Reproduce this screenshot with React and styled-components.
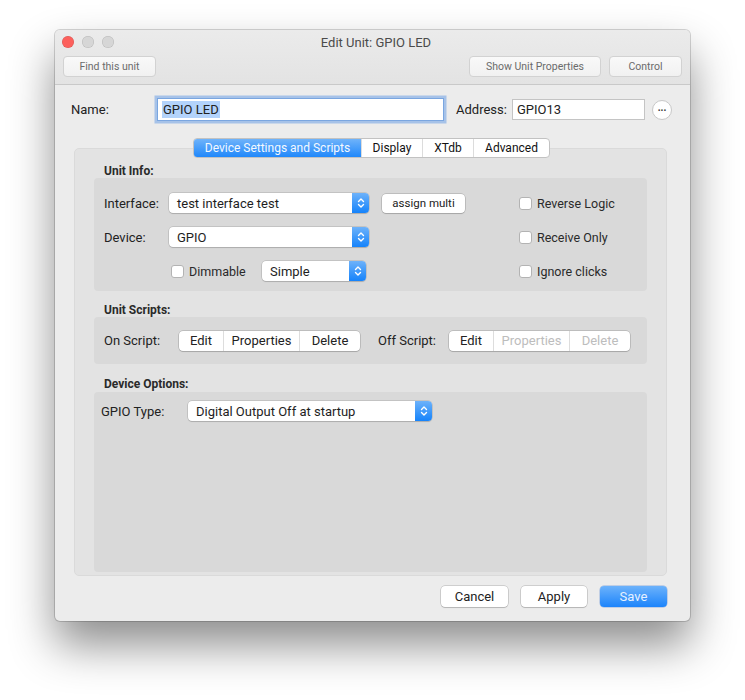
import styled, { createGlobalStyle, css } from "styled-components";

const GlobalStyle = createGlobalStyle`
  body {
    margin: 0;
    background: #fff;
    font-family: Roboto, "Liberation Sans", sans-serif;
    color: #222;
  }
`;

const Page = styled.div`
  padding: 30px 0 0 55px;
  height: 670px;
`;

const Window = styled.div`
  width: 635px;
  height: 591px;
  background: #ececec;
  border-radius: 5px;
  overflow: hidden;
  display: flex;
  flex-direction: column;
  box-shadow: 0 24px 45px rgba(0, 0, 0, 0.45), 0 0 0 1px rgba(0, 0, 0, 0.16);
`;

const TitleBar = styled.div`
  background: linear-gradient(#ebebeb, #e3e3e3);
  border-bottom: 1px solid #c9c9c9;
  padding-bottom: 7px;
`;

const TitleRow = styled.div`
  height: 24px;
  display: grid;
  grid-template-columns: 1fr auto 1fr;
  align-items: center;
  padding-left: 7px;
`;

const Lights = styled.div`
  display: flex;
  gap: 8px;
`;

const Light = styled.span`
  width: 12px;
  height: 12px;
  border-radius: 50%;
  background: ${p => p.$color};
  box-shadow: inset 0 0 0 0.5px rgba(0, 0, 0, 0.15);
`;

const Title = styled.div`
  font-size: 13px;
  color: #4b4b4b;
`;

const Toolbar = styled.div`
  display: flex;
  gap: 8px;
  padding: 0 8px;
  margin-top: 2px;
`;

const ToolButton = styled.div`
  height: 21px;
  width: ${p => p.$w}px;
  box-sizing: border-box;
  border: 1px solid #d2d2d2;
  border-radius: 4px;
  background: linear-gradient(#f9f9f9, #f1f1f1);
  font-size: 10.5px;
  color: #6b6b6b;
  display: flex;
  align-items: center;
  justify-content: center;
  ${p => p.$push && css`margin-left: auto;`}
`;

const Body = styled.div`
  flex: 1;
  display: flex;
  flex-direction: column;
`;

const NameRow = styled.div`
  display: flex;
  align-items: center;
  padding: 13px 0 0 16px;
  font-size: 13px;
`;

const FieldLabel = styled.span`
  width: ${p => p.$w}px;
  flex: none;
  margin-left: ${p => p.$ml || 0}px;
`;

const TextField = styled.div`
  width: ${p => p.$w}px;
  height: ${p => p.$h || 21}px;
  box-sizing: border-box;
  background: #fff;
  border: 1px solid ${p => (p.$focus ? "#7aa6e0" : "#c4c4c4")};
  ${p => p.$focus && css`box-shadow: 0 0 0 2.5px rgba(110, 160, 230, 0.55);`}
  display: flex;
  align-items: center;
  padding-left: 4px;
  font-size: 13px;
  margin-right: ${p => p.$mr || 0}px;
`;

const Selected = styled.span`
  background: #b3d3fb;
  padding: 1px 1px;
`;

const RoundButton = styled.div`
  width: 20px;
  height: 20px;
  border-radius: 50%;
  box-sizing: border-box;
  border: 1px solid #c8c8c8;
  background: #fff;
  margin-left: 7px;
  font-size: 10px;
  font-weight: bold;
  display: flex;
  align-items: center;
  justify-content: center;
  line-height: 1;
  padding-bottom: 3px;
  color: #333;
`;

const TabArea = styled.div`
  margin: 17px 23px 0 19px;
  display: flex;
  flex-direction: column;
`;

const Tabs = styled.div`
  align-self: center;
  display: flex;
  height: 20px;
  box-sizing: border-box;
  border: 1px solid #c2c2c2;
  border-radius: 4px;
  background: #fff;
  overflow: hidden;
  position: relative;
  z-index: 1;
  margin-left: 2px;
`;

const Tab = styled.div`
  width: ${p => p.$w}px;
  display: flex;
  align-items: center;
  justify-content: center;
  font-size: 12px;
  color: #111;
  border-left: 1px solid #dcdcdc;
  &:first-child { border-left: none; }
  ${p => p.$active && css`
    background: linear-gradient(#6fb3fa, #2088fb);
    color: #f4f9ff;
  `}
`;

const TabBox = styled.div`
  margin-top: -10px;
  height: 428px;
  box-sizing: border-box;
  background: #e3e3e3;
  border: 1px solid #dadada;
  border-radius: 5px;
  padding: 0 19px 5px;
  display: flex;
  flex-direction: column;
`;

const SectionLabel = styled.div`
  font-size: 12px;
  font-weight: bold;
  line-height: 14px;
  color: #2a2a2a;
  margin: ${p => p.$top}px 0 ${p => p.$bottom || 0}px 10px;
`;

const Group = styled.div`
  background: #d9d9d9;
  border-radius: 4px;
  box-sizing: border-box;
  height: ${p => p.$h}px;
  padding: ${p => p.$pad};
  font-size: 13px;
  flex: none;
`;

const InfoGrid = styled.div`
  display: grid;
  grid-template-columns: 65px 200px 150px 1fr;
  grid-auto-rows: 34px;
  align-items: center;
`;

const Cell = styled.div`
  display: flex;
  align-items: center;
  padding-left: ${p => p.$pl || 0}px;
`;

const PopupBox = styled.div`
  width: ${p => p.$w}px;
  height: 20px;
  box-sizing: border-box;
  display: flex;
  background: #fff;
  border-radius: 4px;
  box-shadow: 0 0 0 0.5px rgba(0, 0, 0, 0.2), 0 1px 1px rgba(0, 0, 0, 0.12);
  overflow: hidden;
`;

const PopupText = styled.div`
  flex: 1;
  padding-left: 8px;
  display: flex;
  align-items: center;
  font-size: 13px;
  color: #1e1e1e;
`;

const PopupArrow = styled.div`
  width: 17px;
  background: linear-gradient(#6db2fa, #1583fb);
  display: flex;
  align-items: center;
  justify-content: center;
`;

const Popup = ({ w, children }) => (
  <PopupBox $w={w}>
    <PopupText>{children}</PopupText>
    <PopupArrow>
      <svg width="8" height="12" viewBox="0 0 8 12" fill="none" stroke="#fff" strokeWidth="1.4" strokeLinecap="round" strokeLinejoin="round">
        <path d="M1.5 4.5 L4 2 L6.5 4.5" />
        <path d="M1.5 7.5 L4 10 L6.5 7.5" />
      </svg>
    </PopupArrow>
  </PopupBox>
);

const PushButton = styled.div`
  width: ${p => p.$w}px;
  height: ${p => p.$h || 21}px;
  box-sizing: border-box;
  border-radius: 4px;
  background: #fff;
  box-shadow: 0 0 0 0.5px rgba(0, 0, 0, 0.25), 0 1px 1px rgba(0, 0, 0, 0.12);
  display: flex;
  align-items: center;
  justify-content: center;
  font-size: ${p => p.$fs || 13}px;
  color: #222;
  ${p => p.$primary && css`
    background: linear-gradient(#6cb2fb, #1c84fb);
    color: #e6f1ff;
    box-shadow: 0 0 0 0.5px rgba(20, 90, 200, 0.4);
  `}
`;

const CheckRow = styled.label`
  display: flex;
  align-items: center;
  gap: 5px;
  font-size: 12.5px;
  color: #2a2a2a;
  ${p => p.$w && css`width: ${p.$w}px;`}
`;

const Box = styled.span`
  width: 13px;
  height: 13px;
  box-sizing: border-box;
  background: #fff;
  border: 1px solid #b3b3b3;
  border-radius: 3px;
  flex: none;
`;

const Check = ({ w, children }) => (
  <CheckRow $w={w}>
    <Box />
    {children}
  </CheckRow>
);

const ScriptRow = styled.div`
  display: flex;
  align-items: center;
  height: 100%;
`;

const Segmented = styled.div`
  display: flex;
  height: 20px;
  box-sizing: border-box;
  background: #fff;
  border-radius: 4px;
  box-shadow: 0 0 0 0.5px rgba(0, 0, 0, 0.25), 0 1px 1px rgba(0, 0, 0, 0.12);
  overflow: hidden;
`;

const Segment = styled.div`
  width: ${p => p.$w}px;
  display: flex;
  align-items: center;
  justify-content: center;
  font-size: 13px;
  color: ${p => (p.$disabled ? "#bdbdbd" : "#222")};
  border-left: 1px solid #dddddd;
  &:first-child { border-left: none; }
`;

const OptionRow = styled.div`
  display: flex;
  align-items: center;
  height: 20px;
`;

const Footer = styled.div`
  display: flex;
  justify-content: flex-end;
  gap: 13px;
  padding: 10px 23px 0 0;
`;

const ScriptButtons = ({ disabled }) => (
  <Segmented>
    <Segment $w={44}>Edit</Segment>
    <Segment $w={75} $disabled={disabled}>Properties</Segment>
    <Segment $w={60} $disabled={disabled}>Delete</Segment>
  </Segmented>
);

export default function App() {
  return (
    <Page>
      <GlobalStyle />
      <Window>
        <TitleBar>
          <TitleRow>
            <Lights>
              <Light $color="#fc605c" />
              <Light $color="#d6d6d6" />
              <Light $color="#d6d6d6" />
            </Lights>
            <Title>Edit Unit: GPIO LED</Title>
            <span />
          </TitleRow>
          <Toolbar>
            <ToolButton $w={93}>Find this unit</ToolButton>
            <ToolButton $w={132} $push>Show Unit Properties</ToolButton>
            <ToolButton $w={73}>Control</ToolButton>
          </Toolbar>
        </TitleBar>

        <Body>
          <NameRow>
            <FieldLabel $w={86}>Name:</FieldLabel>
            <TextField $w={287} $h={23} $focus $mr={12}>
              <Selected>GPIO LED</Selected>
            </TextField>
            <FieldLabel $w={56}>Address:</FieldLabel>
            <TextField $w={133}>GPIO13</TextField>
            <RoundButton>...</RoundButton>
          </NameRow>

          <TabArea>
            <Tabs>
              <Tab $w={167} $active>Device Settings and Scripts</Tab>
              <Tab $w={60}>Display</Tab>
              <Tab $w={50}>XTdb</Tab>
              <Tab $w={75}>Advanced</Tab>
            </Tabs>
            <TabBox>
              <SectionLabel $top={15}>Unit Info:</SectionLabel>
              <Group $h={113} $pad="8px 0 0 10px">
                <InfoGrid>
                  <Cell>Interface:</Cell>
                  <Popup w={200}>test interface test</Popup>
                  <Cell $pl={13}>
                    <PushButton $w={83} $h={19} $fs={11.5}>assign multi</PushButton>
                  </Cell>
                  <Check>Reverse Logic</Check>

                  <Cell>Device:</Cell>
                  <Popup w={200}>GPIO</Popup>
                  <span />
                  <Check>Receive Only</Check>

                  <span />
                  <Cell $pl={2}>
                    <Check w={91}>Dimmable</Check>
                    <Popup w={104}>Simple</Popup>
                  </Cell>
                  <span />
                  <Check>Ignore clicks</Check>
                </InfoGrid>
              </Group>

              <SectionLabel $top={12}>Unit Scripts:</SectionLabel>
              <Group $h={47} $pad="0 0 0 10px">
                <ScriptRow>
                  <FieldLabel $w={75}>On Script:</FieldLabel>
                  <ScriptButtons />
                  <FieldLabel $w={71} $ml={18}>Off Script:</FieldLabel>
                  <ScriptButtons disabled />
                </ScriptRow>
              </Group>

              <SectionLabel $top={13} $bottom={1}>Device Options:</SectionLabel>
              <Group $h={180} $pad="9px 0 0 7px">
                <OptionRow>
                  <FieldLabel $w={87}>GPIO Type:</FieldLabel>
                  <Popup w={244}>Digital Output Off at startup</Popup>
                </OptionRow>
              </Group>
            </TabBox>
          </TabArea>

          <Footer>
            <PushButton $w={67}>Cancel</PushButton>
            <PushButton $w={66}>Apply</PushButton>
            <PushButton $w={67} $primary>Save</PushButton>
          </Footer>
        </Body>
      </Window>
    </Page>
  );
}
